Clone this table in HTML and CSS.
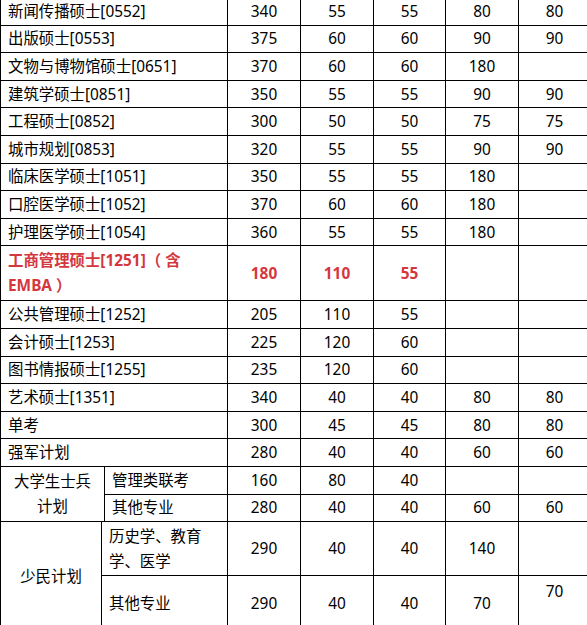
FILE: index.html
```html
<!DOCTYPE html>
<html lang="zh-CN">
<head>
<meta charset="utf-8">
<link rel="stylesheet" href="styles.css">
</head>
<body>
<table class="score">
  <colgroup>
    <col class="c-a"><col class="c-b"><col class="c-c">
    <col class="c-n"><col class="c-n"><col class="c-m"><col class="c-n"><col class="c-m">
  </colgroup>
  <tbody>
    <tr><td colspan="3" class="name">新闻传播硕士[0552]</td><td>340</td><td>55</td><td>55</td><td>80</td><td>80</td></tr>
    <tr><td colspan="3" class="name">出版硕士[0553]</td><td>375</td><td>60</td><td>60</td><td>90</td><td>90</td></tr>
    <tr><td colspan="3" class="name">文物与博物馆硕士[0651]</td><td>370</td><td>60</td><td>60</td><td>180</td><td></td></tr>
    <tr><td colspan="3" class="name">建筑学硕士[0851]</td><td>350</td><td>55</td><td>55</td><td>90</td><td>90</td></tr>
    <tr><td colspan="3" class="name">工程硕士[0852]</td><td>300</td><td>50</td><td>50</td><td>75</td><td>75</td></tr>
    <tr><td colspan="3" class="name">城市规划[0853]</td><td>320</td><td>55</td><td>55</td><td>90</td><td>90</td></tr>
    <tr><td colspan="3" class="name">临床医学硕士[1051]</td><td>350</td><td>55</td><td>55</td><td>180</td><td></td></tr>
    <tr><td colspan="3" class="name">口腔医学硕士[1052]</td><td>370</td><td>60</td><td>60</td><td>180</td><td></td></tr>
    <tr><td colspan="3" class="name">护理医学硕士[1054]</td><td>360</td><td>55</td><td>55</td><td>180</td><td></td></tr>
    <tr class="tall hl"><td colspan="3" class="name">工商管理硕士[1251]（ 含<br>EMBA ）</td><td>180</td><td>110</td><td>55</td><td></td><td></td></tr>
    <tr><td colspan="3" class="name">公共管理硕士[1252]</td><td>205</td><td>110</td><td>55</td><td></td><td></td></tr>
    <tr><td colspan="3" class="name">会计硕士[1253]</td><td>225</td><td>120</td><td>60</td><td></td><td></td></tr>
    <tr><td colspan="3" class="name">图书情报硕士[1255]</td><td>235</td><td>120</td><td>60</td><td></td><td></td></tr>
    <tr><td colspan="3" class="name">艺术硕士[1351]</td><td>340</td><td>40</td><td>40</td><td>80</td><td>80</td></tr>
    <tr><td colspan="3" class="name">单考</td><td>300</td><td>45</td><td>45</td><td>80</td><td>80</td></tr>
    <tr><td colspan="3" class="name">强军计划</td><td>280</td><td>40</td><td>40</td><td>60</td><td>60</td></tr>
    <tr><td colspan="2" rowspan="2" class="group">大学生士兵<br>计划</td><td class="name">管理类联考</td><td>160</td><td>80</td><td>40</td><td></td><td></td></tr>
    <tr><td class="name">其他专业</td><td>280</td><td>40</td><td>40</td><td>60</td><td>60</td></tr>
    <tr class="tall2"><td rowspan="2" class="group">少民计划</td><td colspan="2" class="name">历史学、教育<br>学、医学</td><td>290</td><td>40</td><td>40</td><td>140</td><td></td></tr>
    <tr class="tall3"><td colspan="2" class="name">其他专业</td><td>290</td><td>40</td><td>40</td><td>70</td><td>70<br>&nbsp;</td></tr>
  </tbody>
</table>
</body>
</html>
```
FILE: styles.css
```css
html, body {
  margin: 0;
  padding: 0;
  background: #fff;
  overflow: hidden;
}
body {
  width: 587px;
  height: 625px;
  font-family: "Noto Sans", "Noto Sans CJK SC", sans-serif;
  font-size: 15.4px;
  color: #000;
}
.score {
  border-collapse: collapse;
  table-layout: fixed;
  width: 590px;
  margin-top: -3px;
}
.c-a { width: 101px; }
.c-b { width: 3px; }
.c-c { width: 123px; }
.c-n { width: 73px; }
.c-m { width: 72px; }
.score tr { height: 27.6px; }
.score tr.tall { height: 55px; }
.score tr.tall2 { height: 54px; }
.score tr.tall3 { height: 56px; }
.score td {
  border: 1px solid #000;
  padding: 0;
  text-align: center;
  vertical-align: middle;
  line-height: 25px;
  white-space: nowrap;
}
.score td.name {
  text-align: left;
  padding-left: 7px;
}
.score td.group {
  text-align: center;
}
.hl td {
  color: #d4373d;
  font-weight: bold;
}
```
